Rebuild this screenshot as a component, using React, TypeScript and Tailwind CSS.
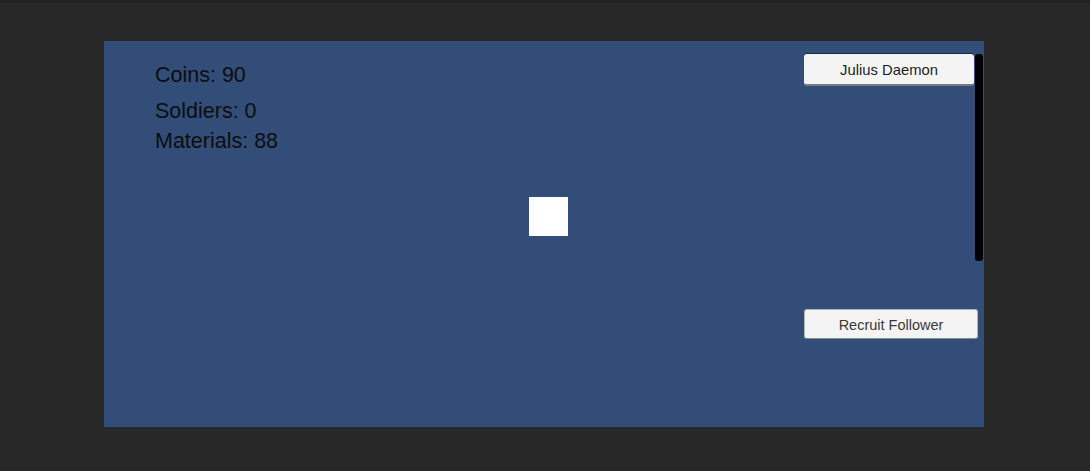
import React from "react";

export default function App() {
  return (
    <div
      className="w-[1090px] h-[471px] bg-[#282828] pt-[41px] pl-[104px] border-t-[3px] border-[#222222] box-border"
      style={{ fontFamily: '"Liberation Sans", Arial, sans-serif' }}
    >
      <div className="w-[880px] h-[386px] bg-[#314d78] flex -mt-[3px]">
        <div className="w-[425px] pl-[51px] pt-[22px] text-[21.5px] leading-[24px] text-[#0d0d0d]">
          <div>Coins: 90</div>
          <div className="mt-[12px]">Soldiers: 0</div>
          <div className="mt-[6px]">Materials: 88</div>
        </div>
        <div className="mt-[156px] w-[39px] h-[39px] bg-white" />
        <div className="w-[236px]" />
        <div className="w-[180px] pt-[13px] flex flex-col">
          <div className="flex gap-[1px]">
            <div className="w-[170px] h-[32px] pt-[2px] bg-[#f4f4f4] rounded-[3px] border-b-[2px] border-[#7a7a7a] shadow-[0_-1px_0_#1a2a40] flex items-center justify-center text-[14.8px] text-[#1e1e1e]">
              Julius Daemon
            </div>
            <div className="w-[8px] h-[207px] bg-black rounded-[3px]" />
          </div>
          <div className="mt-[48px] w-[174px] h-[30px] pt-[3px] bg-[#f4f4f4] rounded-[3px] border border-[#b5b5b5] border-b-[#8a8a8a] flex items-center justify-center text-[14.5px] text-[#3a3a3a]">
            Recruit Follower
          </div>
        </div>
      </div>
    </div>
  );
}
